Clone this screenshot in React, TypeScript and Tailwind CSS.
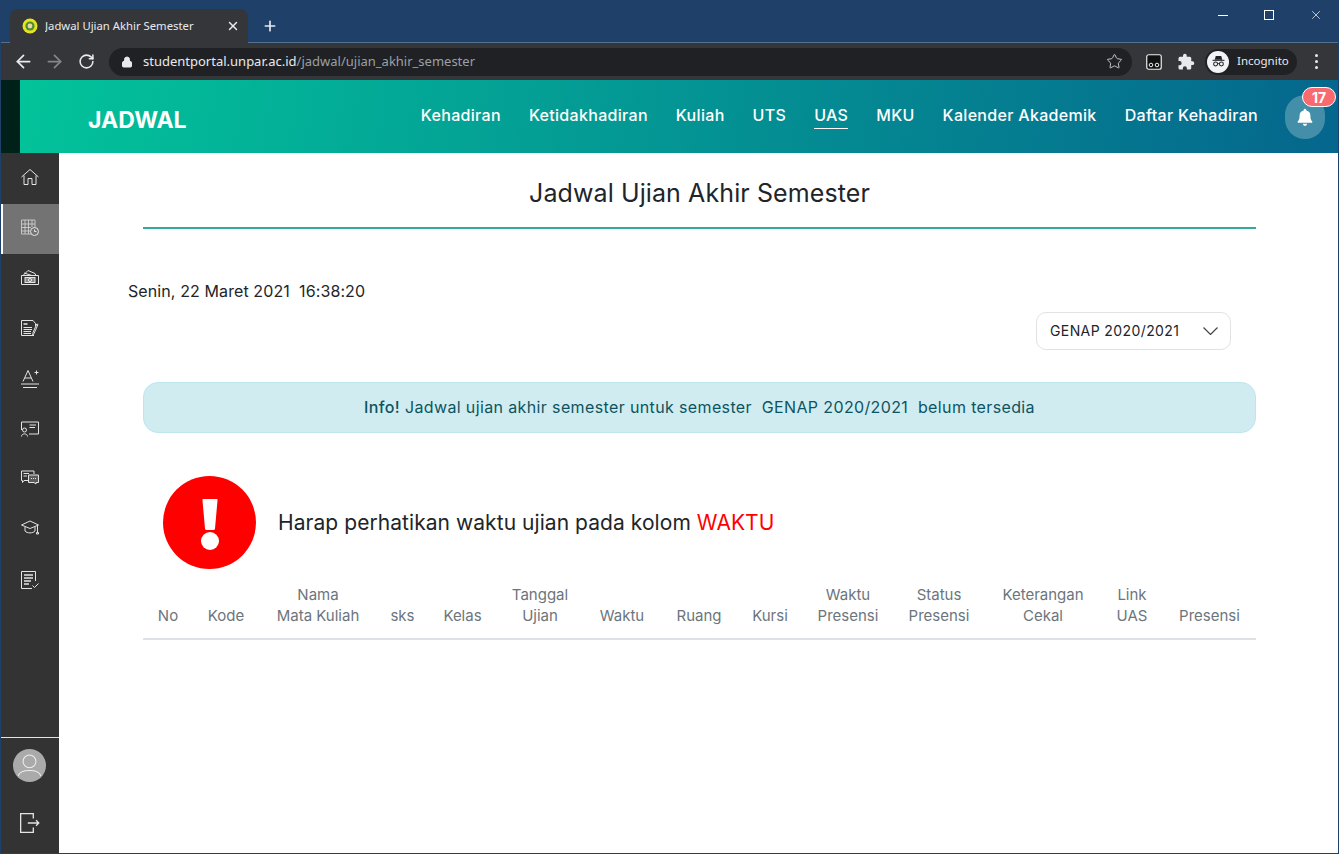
import React from "react";
import { ArrowLeft, ArrowRight, RotateCw, Star, X, Plus, Lock } from "lucide-react";

const nav = ["Kehadiran", "Ketidakhadiran", "Kuliah", "UTS", "UAS", "MKU", "Kalender Akademik", "Daftar Kehadiran"];

const cols: [string[], number][] = [
  [["No"], 50],
  [["Kode"], 66],
  [["Nama", "Mata Kuliah"], 118],
  [["sks"], 51],
  [["Kelas"], 69],
  [["Tanggal", "Ujian"], 86],
  [["Waktu"], 78],
  [["Ruang"], 76],
  [["Kursi"], 66],
  [["Waktu", "Presensi"], 90],
  [["Status", "Presensi"], 92],
  [["Keterangan", "Cekal"], 116],
  [["Link", "UAS"], 62],
  [["Presensi"], 93],
];

const S = ({ children }: { children: React.ReactNode }) => (
  <svg viewBox="0 0 20 20" width="20" height="20" fill="none" stroke="#e4e4e4" strokeWidth="1">
    {children}
  </svg>
);

const rowPad = ["h-[51px] pb-[3px]", "h-[50px] pb-[4px]", "h-[50px] pb-[4px]", "h-[50px] pb-[2px]", "h-[50px]", "h-[50px]", "h-[50px] pb-[4px]", "h-[50px] pb-[4px]", "h-[50px] pt-[2px]"];

const icons: React.ReactNode[] = [
  <S><path d="M1.500 10 10 2.500 18.500 10M4 8.500V17.500H8V11.500H12V17.500H16V8.500" /></S>,
  <S>
    <path d="M1.500 3H15V11M1.500 3V17H11M1.500 7H15M1.500 10.500H11M1.500 14H10M5 3V17M8.500 3V17M12 3V10" stroke="#d8d8d8" strokeWidth="0.800" />
    <circle cx="14.500" cy="14.500" r="4" />
    <path d="M14.500 12.500V14.500H16.500" />
  </S>,
  <S>
    <path d="M1.500 8.500H18.500V17.500H1.500ZM3 8.500 8 3.500 15 6.500 16 8.500M4 6 12 8.500" />
    <rect x="5" y="10.500" width="10" height="5" fill="#8a8a8a" />
    <circle cx="10" cy="13" r="1.600" />
  </S>,
  <S>
    <path d="M14 17.500H1.500V2.500H13L15.500 5.500V8" />
    <rect x="3.500" y="5" width="4" height="2" fill="#bbb" stroke="none" />
    <path d="M3.500 9.500H12M3.500 11.500H12M3.500 13.500H11M3.500 15.500H11" strokeWidth="1.200" />
    <path d="M18 6.500 14 15.500 12.800 17 13 14.500 16.800 6Z" />
  </S>,
  <S>
    <path d="M3 12.500 8 1.500 13 12.500M4.800 9H11.200M14.500 3.500H18.500M16.500 1.500V5.500" />
    <path d="M1 15H19M3 18.500H17" strokeWidth="1.200" />
  </S>,
  <S>
    <path d="M7 3H18.500V15H9M1.500 11V3H7" />
    <path d="M9.500 6H16M9.500 8.500H15" />
    <circle cx="4.500" cy="11" r="2" />
    <path d="M1.500 17.500C1.500 14 7.500 14 7.500 17.500" />
  </S>,
  <S>
    <path d="M1.500 4H14V7M8 13.500H4L2.500 15.500V13.500H1.500V4" />
    <path d="M3.500 6.500H9M3.500 9H7" />
    <path d="M8.500 8H18.500V15.500H16V17L14 15.500H8.500Z" fill="#5a5a5a" />
    <path d="M11 11.500H12M13 11.500H14M15 11.500H16" />
  </S>,
  <S>
    <path d="M1.500 8 10 4 18.500 8 10 11.500Z" />
    <path d="M5 10V14C7 16.500 13 16.500 15 14V10M17.500 9V15" />
    <path d="M16.500 15.500H18.500V17H16.500Z" />
  </S>,
  <S>
    <path d="M15.500 11V1.500H1.500V18.500H12" />
    <path d="M4 5H13M4 8H13M4 11H11M4 14H9" strokeWidth="1.300" />
    <path d="M12.500 15.500 14.500 17.500 18.500 13.500" />
  </S>,
];

export default function App() {
  return (
    <div className="flex h-[854px] w-[1339px] flex-col overflow-hidden border border-[#1f4068] font-['Inter',sans-serif]">
      {/* tab strip */}
      <div className="flex h-[42px] shrink-0 items-end border-b border-[#55708f] bg-[#1f4068] pl-[9px]">
        <div className="-mb-px flex h-[34px] w-[238px] items-center rounded-t-[8px] bg-[#35363a] pl-[12px] pr-[8px]">
          <svg viewBox="0 0 16 16" width="16" height="16" className="shrink-0">
            <circle cx="8" cy="8" r="7.500" fill="#e6e41a" />
            <circle cx="8" cy="8" r="4.600" fill="#4c8a3e" />
            <circle cx="8" cy="8" r="2.400" fill="#e8d9a0" />
          </svg>
          <span className="ml-[7px] flex-1 truncate font-['Noto_Sans',sans-serif] text-[11.300px] text-[#e8eaed]">Jadwal Ujian Akhir Semester</span>
          <X size={14} strokeWidth={2.500} className="text-[#e8eaed]" />
        </div>
        <div className="flex h-[33px] items-center pl-[14px]">
          <Plus size={16} strokeWidth={2.500} className="text-[#e8eaed]" />
        </div>
        <div className="ml-auto flex h-[41px] items-start self-start pr-[15px] pt-[6px] text-[#e8eaed]">
          <div className="mt-[8px] h-px w-[10px] bg-white" />
          <div className="ml-[36px] mt-[3px] h-[10px] w-[10px] border border-white" />
          <X size={14} strokeWidth={1.200} className="ml-[35px] mt-[1px] text-white" />
        </div>
      </div>
      {/* toolbar */}
      <div className="flex h-[37px] shrink-0 items-center bg-[#35363a] pl-[12px] pr-[14px]">
        <ArrowLeft size={21} strokeWidth={2} className="text-[#e8eaed]" />
        <ArrowRight size={21} strokeWidth={2} className="ml-[10px] text-[#84868a]" />
        <RotateCw size={17} strokeWidth={2.200} className="ml-[13px] text-[#e8eaed]" />
        <div className="ml-[14px] flex h-[28px] w-[1023px] items-center rounded-full bg-[#202124] pl-[12px] pr-[9px]">
          <Lock size={12} fill="#e8eaed" strokeWidth={2} className="text-[#e8eaed]" />
          <span className="ml-[10px] flex-1 font-['Noto_Sans',sans-serif] text-[13px] text-[#e8eaed]">
            studentportal.unpar.ac.id<span className="text-[#9aa0a6]">/jadwal/ujian_akhir_semester</span>
          </span>
          <Star size={17} strokeWidth={1.400} className="text-[#c4c7c5]" />
        </div>
        <svg viewBox="0 0 16 16" width="16" height="16" className="ml-[14px]">
          <rect x="0.750" y="0.750" width="14.500" height="14.500" rx="2" fill="#111" stroke="#eee" strokeWidth="1.200" />
          <circle cx="5" cy="11" r="1.800" fill="none" stroke="#eee" />
          <circle cx="11" cy="11" r="1.800" fill="none" stroke="#eee" />
        </svg>
        <svg viewBox="0 0 24 24" width="18" height="18" fill="#e8eaed" className="ml-[15px]">
          <path d="M20.500 11H19V7a2 2 0 0 0-2-2h-4V3.500a2.500 2.500 0 0 0-5 0V5H4a2 2 0 0 0-2 2v3.800h1.500a2.700 2.700 0 0 1 0 5.400H2V20a2 2 0 0 0 2 2h3.800v-1.500a2.700 2.700 0 0 1 5.400 0V22H17a2 2 0 0 0 2-2v-4h1.500a2.500 2.500 0 0 0 0-5z" />
        </svg>
        <div className="ml-[10px] flex h-[26px] w-[92px] items-center rounded-full bg-[#202124] pl-[2px]">
          <span className="flex h-[22px] w-[22px] items-center justify-center rounded-full bg-[#f1f3f4]">
            <svg viewBox="0 0 20 20" width="17" height="17">
              <path d="M5.500 8 6.800 3.500H13.200L14.500 8Z" fill="#202124" />
              <path d="M3 8.600H17" stroke="#202124" strokeWidth="1.200" />
              <circle cx="6.600" cy="13" r="2.300" fill="none" stroke="#202124" strokeWidth="1.200" />
              <circle cx="13.400" cy="13" r="2.300" fill="none" stroke="#202124" strokeWidth="1.200" />
              <path d="M9 12.500H11" stroke="#202124" />
            </svg>
          </span>
          <span className="-mt-px ml-[8px] font-['Noto_Sans',sans-serif] text-[11.500px] text-[#e8eaed]">Incognito</span>
        </div>
        <div className="ml-[18px] flex flex-col gap-[3px]">
          <span className="h-[3px] w-[3px] rounded-full bg-[#e8eaed]" />
          <span className="h-[3px] w-[3px] rounded-full bg-[#e8eaed]" />
          <span className="h-[3px] w-[3px] rounded-full bg-[#e8eaed]" />
        </div>
      </div>
      {/* page header */}
      <div className="flex h-[73px] shrink-0">
        <div className="w-[19px] bg-[#00201a]" />
        <div className="relative flex flex-1 items-center bg-[linear-gradient(100deg,#02c39a,#05668d)] pl-[68px] pr-[80px] text-white">
          <span className="mt-[8px] text-[23px] font-bold leading-none">JADWAL</span>
          <nav className="ml-auto -mt-[2px] flex gap-[28px] text-[16px] font-medium tracking-[0.310px]">
            {nav.map((n) => (
              <span key={n} className={n === "UAS" ? "border-b border-white pb-[1px]" : "pb-[2px]"}>{n}</span>
            ))}
          </nav>
          <div className="absolute right-[13px] top-[15px] flex h-[44px] w-[40px] items-center justify-center rounded-full bg-[#ffffff40]">
            <svg viewBox="0 0 24 24" width="20" height="20" fill="white">
              <path d="M12 2a1.600 1.600 0 0 0-1.600 1.600v.6A6.500 6.500 0 0 0 5.500 10.500c0 4.500-1.200 5.600-2.200 6.800-.4.5-.1 1.700 1 1.700h15.400c1.100 0 1.400-1.200 1-1.700-1-1.200-2.200-2.300-2.200-6.800a6.500 6.500 0 0 0-4.900-6.300v-.6A1.600 1.600 0 0 0 12 2zM9.500 20.200a2.500 2.500 0 0 0 5 0z" />
            </svg>
          </div>
          <span className="absolute right-[2px] top-[7px] flex h-[20px] w-[34px] items-center justify-center rounded-[10px] border border-white bg-[#f96a6f] text-[14px] font-bold text-white">17</span>
        </div>
      </div>
      {/* body */}
      <div className="flex min-h-0 flex-1">
        <aside className="flex w-[58px] shrink-0 flex-col bg-[#333333]">
          {icons.map((ic, i) => (
            <div
              key={i}
              className={
                "flex shrink-0 items-center justify-center border-l-2 pr-[2px] " +
                (i === 1 ? "border-white bg-[#737373] " : "border-transparent ") +
                rowPad[i]
              }
            >
              {ic}
            </div>
          ))}
          <div className="mt-auto flex h-[116px] flex-col items-center border-t border-[#e4e4e4]">
            <svg viewBox="0 0 32 32" width="33" height="33" className="-ml-px mt-[11px] shrink-0">
              <circle cx="16" cy="16" r="16" fill="#aaaaaa" />
              <circle cx="16" cy="12" r="6.200" fill="none" stroke="#eee" strokeWidth="1" />
              <path d="M5 26C7 19 25 19 27 26" fill="none" stroke="#eee" strokeWidth="1" />
            </svg>
            <svg viewBox="0 0 20 20" width="22" height="22" fill="none" stroke="#e4e4e4" strokeWidth="1.200" className="mt-[30px]">
              <path d="M13 6V1.500H1.500V18.500H13V14M8 10H18M15.500 7.500 18 10 15.500 12.500" />
            </svg>
          </div>
        </aside>
        <main className="flex-1 bg-white px-[84px] text-[#212529]">
          <h1 className="mt-[25px] text-center text-[25px] font-normal leading-[30px] tracking-[0.100px]">Jadwal Ujian Akhir Semester</h1>
          <div className="mt-[19px] h-[2px] bg-[#33ab9c]" />
          <p className="-ml-[15px] mt-[50px] text-[16px] leading-[24px] tracking-[0.100px]">Senin, 22 Maret 2021&nbsp; 16:38:20</p>
          <div className="mt-[9px] flex justify-end pr-[25px]">
            <div className="flex h-[38px] w-[195px] items-center justify-between rounded-[10px] border border-[#e2e2e2] pb-[1px] pl-[13px] pr-[12px] text-[14px] tracking-[0.400px] text-[#212529]">
              GENAP 2020/2021
              <svg viewBox="0 0 15 8" width="15" height="8" fill="none" stroke="#444" strokeWidth="1.200">
                <path d="M0.500 0.500 7.500 7.500 14.500 0.500" />
              </svg>
            </div>
          </div>
          <div className="mt-[32px] flex h-[51px] items-center justify-center rounded-[15px] border border-[#bee5eb] bg-[#d1ecf1] pb-[1px] text-[16px] tracking-[0.370px] text-[#0c5460]">
            <span className="font-medium">Info!</span>
            <span>&nbsp;Jadwal ujian akhir semester untuk semester &nbsp;GENAP 2020/2021 &nbsp;belum tersedia</span>
          </div>
          <div className="ml-[20px] mt-[43px] flex items-center">
            <svg viewBox="0 0 93 93" width="93" height="93" className="shrink-0">
              <circle cx="46.500" cy="46.500" r="46.500" fill="#ff0000" />
              <path d="M39.500 24.500Q39 23 40.500 23H53.500Q55 23 54.500 24.500L52 52.500Q51.800 54 50.500 54H43.500Q42.200 54 42 52.500Z" fill="white" />
              <circle cx="47" cy="65" r="9" fill="white" />
            </svg>
            <p className="ml-[22px] mt-[1px] text-[21px] tracking-[0.060px]">
              Harap perhatikan waktu ujian pada kolom <span className="text-[#ff0000]">WAKTU</span>
            </p>
          </div>
          <table className="mt-[15px] w-full table-fixed border-b-2 border-[#dee2e6] text-center text-[15px] text-[#6c757d]">
            <colgroup>
              {cols.map(([, w], i) => (
                <col key={i} style={{ width: w }} />
              ))}
            </colgroup>
            <thead>
              <tr>
                {cols.map(([lines], i) => (
                  <th key={i} className="pb-[12px] align-bottom font-normal leading-[21px]">
                    {lines.map((l) => (
                      <div key={l}>{l}</div>
                    ))}
                  </th>
                ))}
              </tr>
            </thead>
          </table>
        </main>
      </div>
    </div>
  );
}
